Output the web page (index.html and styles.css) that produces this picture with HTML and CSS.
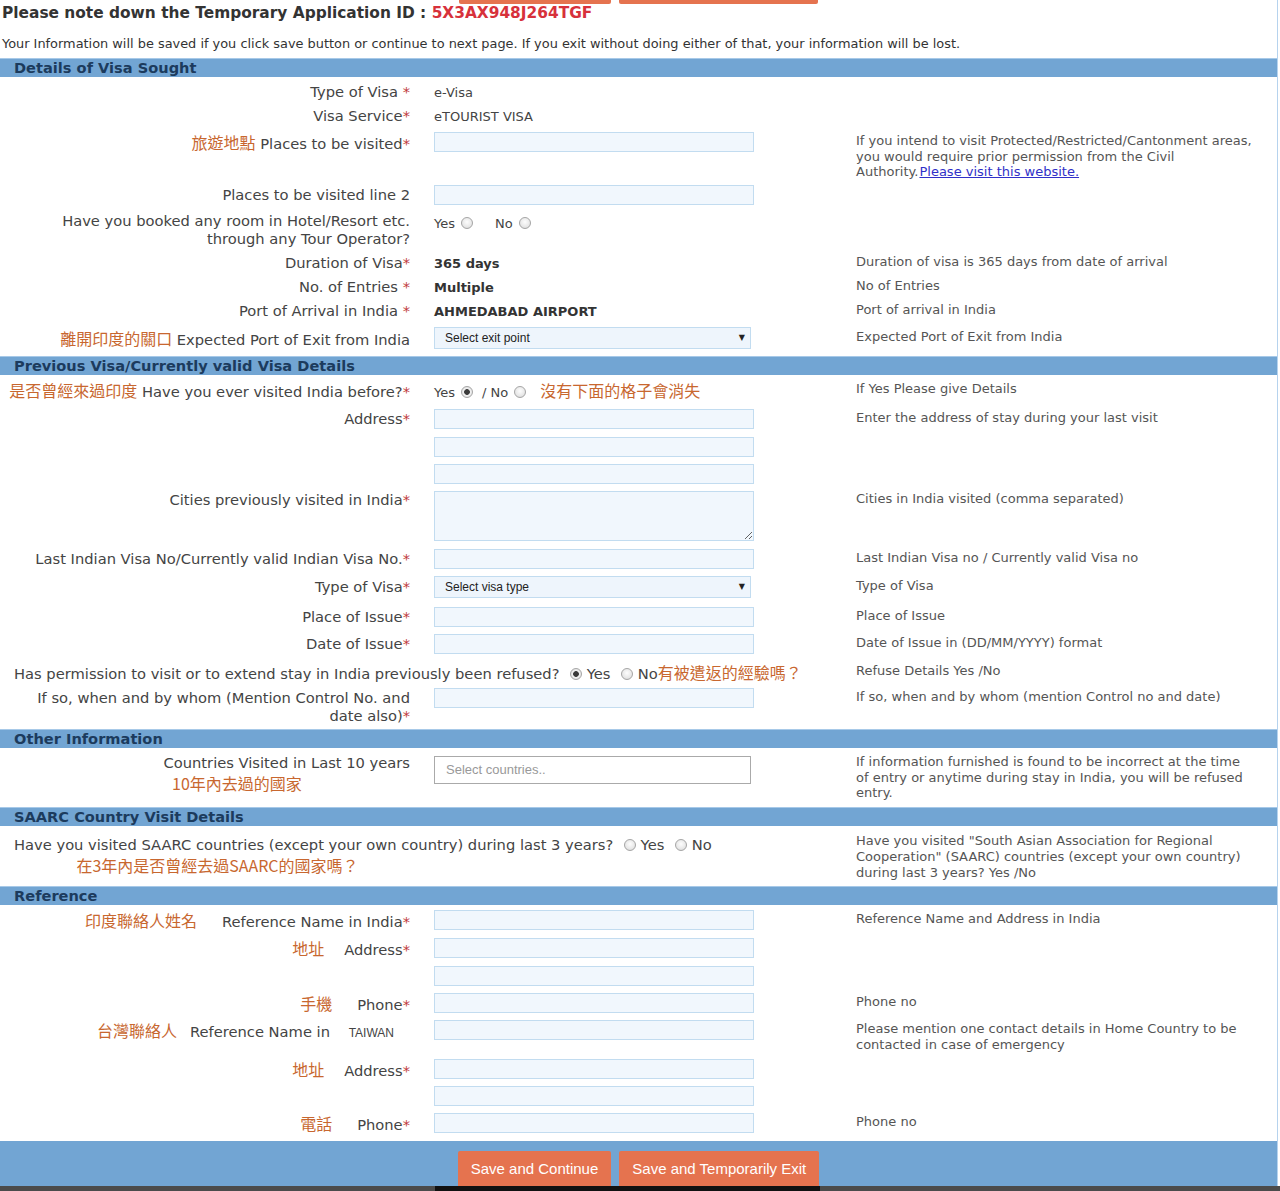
FILE: index.html
```html
<!DOCTYPE html>
<html lang="en">
<head>
<meta charset="utf-8">
<title>e-Visa Application</title>
<link rel="stylesheet" href="styles.css">
</head>
<body>
<div class="page">
  <!-- lower edge of the toolbar that scrolled out of view -->
  <div class="actions actions-top" aria-hidden="true">
    <span class="btn-edge btn-edge-continue"></span>
    <span class="btn-edge btn-edge-exit"></span>
  </div>

  <p class="app-id">Please note down the Temporary Application ID : <span class="app-id-value">5X3AX948J264TGF</span></p>
  <p class="save-note">Your Information will be saved if you click save button or continue to next page. If you exit without doing either of that, your information will be lost.</p>

  <!-- Details of Visa Sought -->
  <section class="panel">
    <h2 class="panel-title">Details of Visa Sought</h2>
    <div class="panel-body">
      <div class="row h24">
        <div class="label">Type of Visa <span class="req">*</span></div>
        <div class="field"><span class="value">e-Visa</span></div>
        <div class="help"></div>
      </div>
      <div class="row h26">
        <div class="label">Visa Service<span class="req">*</span></div>
        <div class="field"><span class="value">eTOURIST VISA</span></div>
        <div class="help"></div>
      </div>
      <div class="row h53">
        <div class="label"><span class="zh">旅遊地點</span> Places to be visited<span class="req">*</span></div>
        <div class="field"><input class="input" type="text"></div>
        <div class="help">If you intend to visit Protected/Restricted/Cantonment areas, you would require prior permission from the Civil Authority.<a href="#" class="link">Please visit this website.</a></div>
      </div>
      <div class="row h26">
        <div class="label">Places to be visited line 2</div>
        <div class="field"><input class="input" type="text"></div>
        <div class="help"></div>
      </div>
      <div class="row h42">
        <div class="label label-2l">Have you booked any room in Hotel/Resort etc.<br>through any Tour Operator?</div>
        <div class="field field-radios field-radios-low"><span class="opt-sm">Yes</span><input class="radio" type="radio" name="hotel"><span class="opt-sm opt-gap">No</span><input class="radio" type="radio" name="hotel"></div>
        <div class="help"></div>
      </div>
      <div class="row h24">
        <div class="label">Duration of Visa<span class="req">*</span></div>
        <div class="field"><span class="value strong">365 days</span></div>
        <div class="help">Duration of visa is 365 days from date of arrival</div>
      </div>
      <div class="row h24">
        <div class="label">No. of Entries <span class="req">*</span></div>
        <div class="field"><span class="value strong">Multiple</span></div>
        <div class="help">No of Entries</div>
      </div>
      <div class="row h27">
        <div class="label">Port of Arrival in India <span class="req">*</span></div>
        <div class="field"><span class="value strong">AHMEDABAD AIRPORT</span></div>
        <div class="help">Port of arrival in India</div>
      </div>
      <div class="row h32">
        <div class="label"><span class="zh">離開印度的關口</span> Expected Port of Exit from India</div>
        <div class="field"><div class="select"><select><option>Select exit point</option></select></div></div>
        <div class="help">Expected Port of Exit from India</div>
      </div>
    </div>
  </section>

  <!-- Previous Visa -->
  <section class="panel">
    <h2 class="panel-title">Previous Visa/Currently valid Visa Details</h2>
    <div class="panel-body">
      <div class="row h29">
        <div class="label nowrap"><span class="zh">是否曾經來過印度</span> Have you ever visited India before?<span class="req">*</span></div>
        <div class="field field-radios"><span class="opt-sm">Yes</span><input class="radio" type="radio" name="visited" checked><span class="opt-sm opt-slash">/ No</span><input class="radio" type="radio" name="visited"><span class="zh zh-note">沒有下面的格子會消失</span></div>
        <div class="help">If Yes Please give Details</div>
      </div>
      <div class="row h28">
        <div class="label">Address<span class="req">*</span></div>
        <div class="field"><input class="input" type="text"></div>
        <div class="help">Enter the address of stay during your last visit</div>
      </div>
      <div class="row h27">
        <div class="label"></div>
        <div class="field"><input class="input" type="text"></div>
        <div class="help"></div>
      </div>
      <div class="row h26">
        <div class="label"></div>
        <div class="field"><input class="input" type="text"></div>
        <div class="help"></div>
      </div>
      <div class="row h59">
        <div class="label">Cities previously visited in India<span class="req">*</span></div>
        <div class="field"><textarea class="textarea"></textarea></div>
        <div class="help">Cities in India visited (comma separated)</div>
      </div>
      <div class="row h28">
        <div class="label nowrap">Last Indian Visa No/Currently valid Indian Visa No.<span class="req">*</span></div>
        <div class="field"><input class="input" type="text"></div>
        <div class="help">Last Indian Visa no / Currently valid Visa no</div>
      </div>
      <div class="row h30">
        <div class="label">Type of Visa<span class="req">*</span></div>
        <div class="field"><div class="select"><select><option>Select visa type</option></select></div></div>
        <div class="help">Type of Visa</div>
      </div>
      <div class="row h27">
        <div class="label">Place of Issue<span class="req">*</span></div>
        <div class="field"><input class="input" type="text"></div>
        <div class="help">Place of Issue</div>
      </div>
      <div class="row h28">
        <div class="label">Date of Issue<span class="req">*</span></div>
        <div class="field"><input class="input" type="text"></div>
        <div class="help">Date of Issue in (DD/MM/YYYY) format</div>
      </div>
      <div class="row h26">
        <div class="label label-wide nowrap">Has permission to visit or to extend stay in India previously been refused? <input class="radio" type="radio" name="refused" checked> Yes <input class="radio" type="radio" name="refused"> No<span class="zh">有被遣返的經驗嗎？</span></div>
        <div class="help">Refuse Details Yes /No</div>
      </div>
      <div class="row h45">
        <div class="label label-2l">If so, when and by whom (Mention Control No. and<br>date also)<span class="req">*</span></div>
        <div class="field"><input class="input" type="text"></div>
        <div class="help">If so, when and by whom (mention Control no and date)</div>
      </div>
    </div>
  </section>

  <!-- Other Information -->
  <section class="panel">
    <h2 class="panel-title">Other Information</h2>
    <div class="panel-body">
      <div class="row h58">
        <div class="label">Countries Visited in Last 10 years<span class="zh zh-line">10年內去過的國家</span></div>
        <div class="field"><div class="multi">Select countries..</div></div>
        <div class="help">If information furnished is found to be incorrect at the time of entry or anytime during stay in India, you will be refused entry.</div>
      </div>
    </div>
  </section>

  <!-- SAARC -->
  <section class="panel">
    <h2 class="panel-title">SAARC Country Visit Details</h2>
    <div class="panel-body">
      <div class="row h59">
        <div class="label label-wide label-saarc nowrap">Have you visited SAARC countries (except your own country) during last 3 years? <input class="radio" type="radio" name="saarc"> Yes <input class="radio" type="radio" name="saarc"> No<span class="zh zh-center">在3年內是否曾經去過SAARC的國家嗎？</span></div>
        <div class="help help-saarc">Have you visited "South Asian Association for Regional Cooperation" (SAARC) countries (except your own country) during last 3 years? Yes /No</div>
      </div>
    </div>
  </section>

  <!-- Reference -->
  <section class="panel">
    <h2 class="panel-title">Reference</h2>
    <div class="panel-body">
      <div class="row h28">
        <div class="label nowrap"><span class="zh zh-gap">印度聯絡人姓名</span>Reference Name in India<span class="req">*</span></div>
        <div class="field"><input class="input" type="text"></div>
        <div class="help">Reference Name and Address in India</div>
      </div>
      <div class="row h28">
        <div class="label"><span class="zh zh-gap-sm">地址</span>Address<span class="req">*</span></div>
        <div class="field"><input class="input" type="text"></div>
        <div class="help"></div>
      </div>
      <div class="row h27">
        <div class="label"></div>
        <div class="field"><input class="input" type="text"></div>
        <div class="help"></div>
      </div>
      <div class="row h27">
        <div class="label"><span class="zh zh-gap">手機</span>Phone<span class="req">*</span></div>
        <div class="field"><input class="input" type="text"></div>
        <div class="help">Phone no</div>
      </div>
      <div class="row h39">
        <div class="label nowrap"><span class="zh zh-gap-xs">台灣聯絡人</span>Reference Name in <span class="country">TAIWAN</span></div>
        <div class="field"><input class="input" type="text"></div>
        <div class="help">Please mention one contact details in Home Country to be contacted in case of emergency</div>
      </div>
      <div class="row h27">
        <div class="label"><span class="zh zh-gap-sm">地址</span>Address<span class="req">*</span></div>
        <div class="field"><input class="input" type="text"></div>
        <div class="help"></div>
      </div>
      <div class="row h27">
        <div class="label"></div>
        <div class="field"><input class="input" type="text"></div>
        <div class="help"></div>
      </div>
      <div class="row h32">
        <div class="label"><span class="zh zh-gap">電話</span>Phone<span class="req">*</span></div>
        <div class="field"><input class="input" type="text"></div>
        <div class="help">Phone no</div>
      </div>
    </div>
  </section>

  <div class="actions actions-bottom">
    <button class="btn" type="button">Save and Continue</button>
    <button class="btn" type="button">Save and Temporarily Exit</button>
  </div>
</div>
<div class="taskbar"><span class="taskbar-item"></span></div>
</body>
</html>
```

FILE: styles.css
```css
* { box-sizing: border-box; }

html, body {
  margin: 0;
  padding: 0;
  background: #fff;
}

body {
  font-family: "DejaVu Sans", Verdana, sans-serif;
  color: #444;
  overflow: hidden;
}

.page {
  width: 1278px;
  border-right: 1px solid #b6d3ee;
}

/* action buttons */
.actions {
  display: flex;
  justify-content: center;
  align-items: flex-end;
  gap: 8px;
}
.actions-top {
  height: 4px;
  overflow: hidden;
}
.btn-edge {
  display: block;
  height: 4px;
  background: #e5734f;
  border-radius: 0 0 2px 2px;
}
.btn-edge-continue { width: 152px; }
.btn-edge-exit { width: 199px; }
.actions-bottom {
  height: 45px;
  background: #72a5d3;
}
.btn {
  height: 35px;
  padding: 0 13px;
  border: 0;
  border-radius: 2px 2px 0 0;
  background: #e5734f;
  color: #fff;
  font: 15px "Liberation Sans", Arial, sans-serif;
  flex: none;
}

.app-id {
  margin: 0;
  padding-left: 2px;
  font-size: 15.4px;
  font-weight: bold;
  line-height: 18px;
  color: #333;
}
.app-id-value { color: #d7313b; }

.save-note {
  margin: 14px 0 6px;
  padding-left: 2px;
  font-size: 12.9px;
  line-height: 16px;
  color: #333;
  white-space: nowrap;
}

/* panels */
.panel-title {
  margin: 0;
  height: 19px;
  border-top: 1px solid #a7c9e8;
  background: #72a5d3;
  color: #1c3b5d;
  font-size: 14.6px;
  line-height: 18px;
  padding-left: 14px;
}
.panel-body { padding-top: 1px; }

.row {
  display: grid;
  grid-template-columns: 410px 446px 1fr;
  align-items: start;
}
.h24 { height: 24px; }
.h26 { height: 26px; }
.h27 { height: 27px; }
.h28 { height: 28px; }
.h29 { height: 29px; }
.h30 { height: 30px; }
.h32 { height: 32px; }
.h39 { height: 39px; }
.h42 { height: 42px; }
.h45 { height: 45px; }
.h53 { height: 53px; }
.h58 { height: 58px; }
.h59 { height: 59px; }

.label {
  text-align: right;
  padding-top: 4px;
  font-size: 14.7px;
  line-height: 20px;
  color: #444;
}
.label-2l { padding-top: 5px; line-height: 18px; }
.nowrap { white-space: nowrap; }
.label-wide {
  grid-column: 1 / 3;
  text-align: left;
  padding-left: 14px;
}
.label-saarc { padding-top: 7px; line-height: 21px; }

.req { color: #c0393d; }

.field {
  padding: 4px 0 0 24px;
  line-height: 20px;
}
.value { font-size: 13px; color: #444; }
.value.strong { font-weight: bold; color: #333; }

.help {
  padding: 5px 20px 0 0;
  max-width: 417px;
  font-size: 13px;
  line-height: 15.5px;
  color: #555;
}
.help-saarc { padding-top: 6px; line-height: 16px; }
.link { color: #3030c8; margin-left: 1px; }

/* chinese notes */
.zh {
  font-family: "Noto Sans CJK TC", "Noto Sans CJK SC", sans-serif;
  font-size: 16px;
  color: #c8672f;
}
.zh-note { margin-left: 14px; }
.zh-line {
  display: block;
  text-align: left;
  padding-left: 172px;
  line-height: 20px;
}
.zh-center {
  display: block;
  width: 407px;
  text-align: center;
  line-height: 21px;
}
.zh-gap { margin-right: 25px; }
.zh-gap-sm { margin-right: 20px; }
.zh-gap-xs { margin-right: 13px; }
.country {
  font: 12px "Liberation Sans", Arial, sans-serif;
  margin: 0 16px 0 14px;
}

/* controls */
.input {
  display: block;
  width: 320px;
  height: 20px;
  margin: 0;
  padding: 0 4px;
  border: 1px solid #c2dcf0;
  background: #f1f7fd;
}
.textarea {
  display: block;
  width: 320px;
  height: 50px;
  margin: 1px 0 0;
  border: 1px solid #c2dcf0;
  background: #f1f7fd;
  resize: vertical;
}
.select {
  position: relative;
  width: 317px;
  height: 22px;
  margin-top: -1px;
}
.select select {
  appearance: none;
  -webkit-appearance: none;
  display: block;
  width: 100%;
  height: 100%;
  margin: 0;
  padding: 0 0 0 10px;
  border: 1px solid #c2dcf0;
  border-radius: 0;
  background: #eef5fc;
  color: #222;
  font: 12px "Liberation Sans", Arial, sans-serif;
}
.select::after {
  content: "\25BC";
  position: absolute;
  right: 6px;
  top: 6px;
  font-size: 8px;
  line-height: 10px;
  color: #222;
  pointer-events: none;
}
.multi {
  width: 317px;
  height: 28px;
  margin-top: 3px;
  border: 1px solid #aaa;
  background: #fff;
  padding-left: 11px;
  font: 13px/26px "Liberation Sans", Arial, sans-serif;
  color: #999;
}

.field-radios { font-size: 13px; }
.field-radios-low { padding-top: 7px; }
.opt-sm { font-size: 13px; }
.opt-gap { margin-left: 22px; }
.opt-slash { margin-left: 9px; }

.radio {
  appearance: none;
  -webkit-appearance: none;
  width: 12px;
  height: 12px;
  margin: 0 0 0 6px;
  border: 1px solid #a5a5a5;
  border-radius: 50%;
  background: radial-gradient(circle at 50% 40%, #fdfdfd 0, #e6e6e6 65%, #cdcdcd 100%);
  vertical-align: -1px;
}
.radio:checked {
  background: radial-gradient(circle, #3a3a3a 0 2.5px, #f2f2f2 3.2px, #d6d6d6 100%);
}

.taskbar {
  height: 5px;
  background: #4b4b4b;
  padding-left: 435px;
}
.taskbar-item {
  display: block;
  width: 385px;
  height: 5px;
  background: #111;
}
```
